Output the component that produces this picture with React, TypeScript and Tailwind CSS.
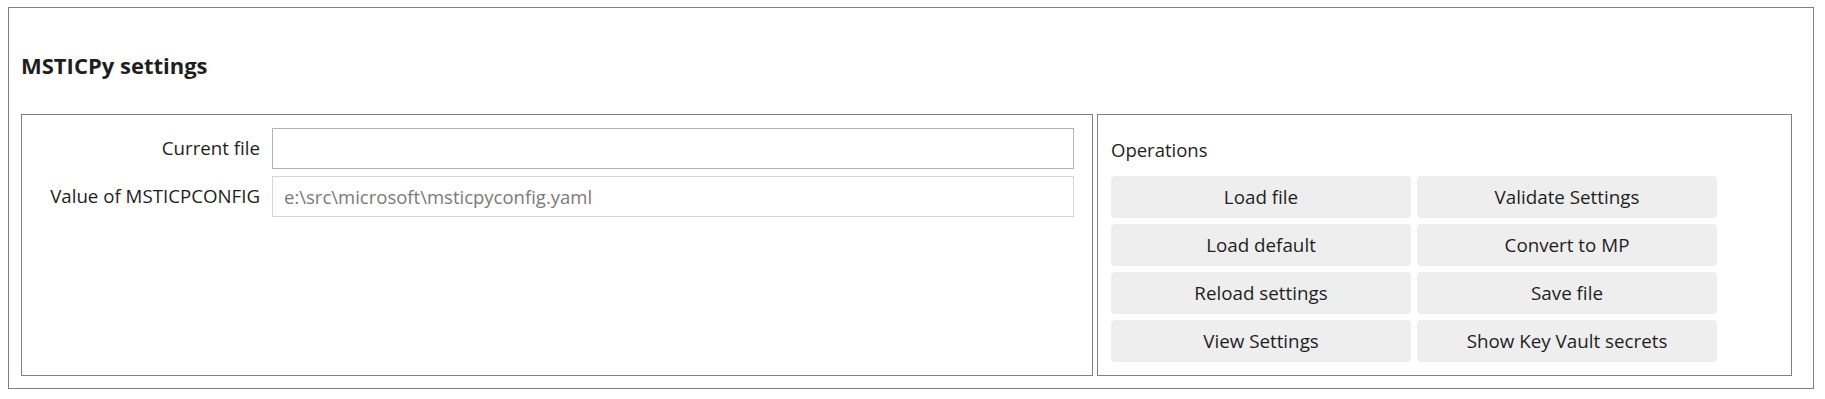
import React from 'react';

const ops = [
  ['Load file', 'Validate Settings'],
  ['Load default', 'Convert to MP'],
  ['Reload settings', 'Save file'],
  ['View Settings', 'Show Key Vault secrets'],
];

function Field({ label, value, disabled }: { label: string; value: string; disabled?: boolean }) {
  return (
    <div className="flex items-center">
      <label className="w-[238px] shrink-0 text-right text-[18.7px] text-[#1e1e1e]">{label}</label>
      <input
        type="text"
        readOnly
        value={value}
        className={`ml-[12px] h-[41px] w-[802px] border px-[11px] text-[18.5px] outline-none ${
          disabled
            ? 'border-[#d4d4d4] text-[#7a7a7a]'
            : 'border-[#b4b4b4] text-[#1e1e1e]'
        }`}
      />
    </div>
  );
}

export default function App() {
  return (
    <div className="bg-white pl-[8px] pt-[7px] font-['Open_Sans','Noto_Sans',sans-serif]">
      <div className="h-[382px] w-[1806px] border border-[#808080] pl-[12px] pt-[42px]">
        <h2 className="text-[22px] font-bold leading-[30px] text-[#1e1e1e]">MSTICPy settings</h2>

        <div className="mt-[34px] flex gap-[4px]">
          <div className="h-[262px] w-[1072px] border border-[#808080] pt-[13px]">
            <div className="flex flex-col gap-[7px]">
              <Field label="Current file" value="" />
              <Field label="Value of MSTICPCONFIG" value="e:\src\microsoft\msticpyconfig.yaml" disabled />
            </div>
          </div>

          <div className="h-[262px] w-[695px] border border-[#808080] pl-[13px] pt-[22px]">
            <div className="text-[18.5px] leading-[26px] text-[#1e1e1e]">Operations</div>
            <div className="mt-[13px] grid w-[606px] grid-cols-2 gap-[6px]">
              {ops.flat().map((name) => (
                <button
                  key={name}
                  type="button"
                  className="h-[42px] rounded-[4px] bg-[#eeeeee] text-center text-[18.8px] text-[#1e1e1e]"
                >
                  {name}
                </button>
              ))}
            </div>
          </div>
        </div>
      </div>
    </div>
  );
}
